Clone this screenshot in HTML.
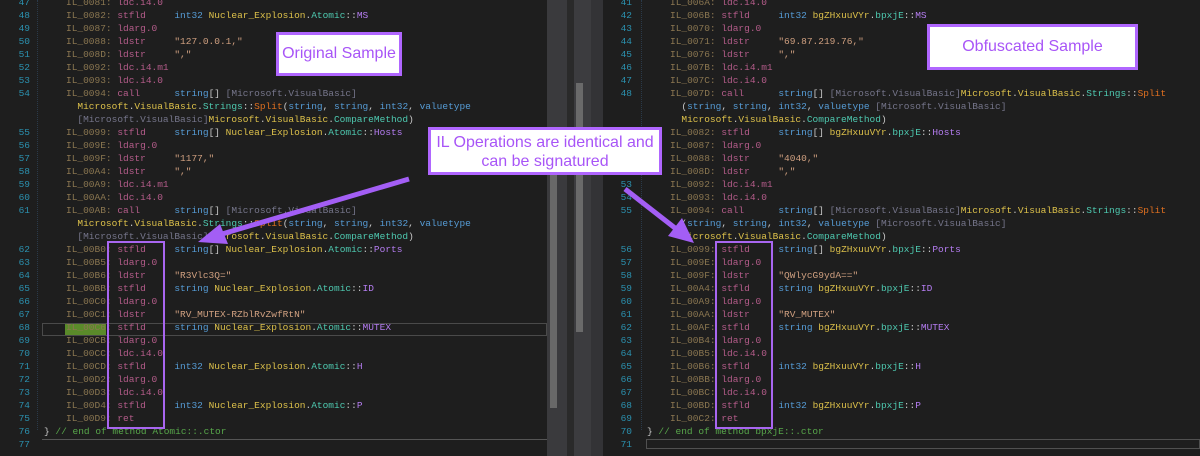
<!DOCTYPE html>
<html><head><meta charset="utf-8"><style>
body{margin:0;width:1200px;height:456px;background:#1e1e1e;overflow:hidden;position:relative;font-family:"Liberation Mono",monospace;}
.p{position:absolute;top:0;height:456px;}
.ln{position:absolute;font-size:9.5px;line-height:13px;color:#2b91af;text-align:right;width:30px;white-space:pre;}
.cd{position:absolute;font-size:9.5px;line-height:13px;color:#c8c8c8;white-space:pre;}
.l{color:#8a7650}.o{color:#b45c8a}.t{color:#569cd6}.c{color:#dcc04a}.n{color:#4ec9b0}.m{color:#b47cf0}.s{color:#d0a080}.g{color:#75758a}.f{color:#e07020}.cm{color:#57a64a}
.box{position:absolute;background:#fff;border:3px solid #b066ff;color:#a855f7;font-family:"Liberation Sans",sans-serif;font-size:16px;text-align:center;box-sizing:border-box;}
</style></head><body>
<!-- separators / scrollbars -->
<div style="position:absolute;left:547px;top:0;width:20px;height:456px;background:#3a3a3d"></div>
<div style="position:absolute;left:550px;top:175px;width:7px;height:233px;background:#686868"></div>
<div style="position:absolute;left:567px;top:0;width:7px;height:456px;background:#2a2a2a"></div>
<div style="position:absolute;left:574px;top:0;width:17px;height:456px;background:#3c3c3f"></div>
<div style="position:absolute;left:576px;top:83px;width:7px;height:249px;background:#6a6a6a"></div>
<div style="position:absolute;left:591px;top:0;width:12px;height:456px;background:#333336"></div>
<div style="position:absolute;left:603px;top:0;width:597px;height:456px;background:#1e1e1e"></div>

<!-- left highlights -->
<div style="position:absolute;left:42px;top:323px;width:503px;height:11px;border:1px solid #4a4a4a"></div>
<div style="position:absolute;left:65px;top:324px;width:41px;height:11px;background:#5a8a2a"></div>
<div style="position:absolute;left:42px;top:439px;width:505px;height:1px;background:#555"></div>
<div style="position:absolute;left:646px;top:439px;width:554px;height:10px;border:1px solid #505050;box-sizing:border-box"></div>
<div style="position:absolute;left:37px;top:0;width:1px;height:430px;border-left:1px dotted #2a3a4a"></div>
<div style="position:absolute;left:641px;top:0;width:1px;height:430px;border-left:1px dotted #2a3a4a"></div>

<div class="ln" style="left:0;top:-4px">47
48
49
50
51
52
53
54


55
56
57
58
59
60
61


62
63
64
65
66
67
68
69
70
71
72
73
74
75
76
77</div>
<div class="cd" style="left:66px;top:-4px"><span class="l">IL_0081:</span> <span class="o">ldc.i4.0</span>
<span class="l">IL_0082:</span> <span class="o">stfld</span>     <span class="t">int32</span> <span class="c">Nuclear_Explosion</span>.<span class="n">Atomic</span>::<span class="m">MS</span>
<span class="l">IL_0087:</span> <span class="o">ldarg.0</span>
<span class="l">IL_0088:</span> <span class="o">ldstr</span>     <span class="s">"127.0.0.1,"</span>
<span class="l">IL_008D:</span> <span class="o">ldstr</span>     <span class="s">","</span>
<span class="l">IL_0092:</span> <span class="o">ldc.i4.m1</span>
<span class="l">IL_0093:</span> <span class="o">ldc.i4.0</span>
<span class="l">IL_0094:</span> <span class="o">call</span>      <span class="t">string</span>[] <span class="g">[Microsoft.VisualBasic]</span>
  <span class="c">Microsoft</span>.<span class="c">VisualBasic</span>.<span class="n">Strings</span>::<span class="f">Split</span>(<span class="t">string</span>, <span class="t">string</span>, <span class="t">int32</span>, <span class="t">valuetype</span>
  <span class="g">[Microsoft.VisualBasic]</span><span class="c">Microsoft</span>.<span class="c">VisualBasic</span>.<span class="n">CompareMethod</span>)
<span class="l">IL_0099:</span> <span class="o">stfld</span>     <span class="t">string</span>[] <span class="c">Nuclear_Explosion</span>.<span class="n">Atomic</span>::<span class="m">Hosts</span>
<span class="l">IL_009E:</span> <span class="o">ldarg.0</span>
<span class="l">IL_009F:</span> <span class="o">ldstr</span>     <span class="s">"1177,"</span>
<span class="l">IL_00A4:</span> <span class="o">ldstr</span>     <span class="s">","</span>
<span class="l">IL_00A9:</span> <span class="o">ldc.i4.m1</span>
<span class="l">IL_00AA:</span> <span class="o">ldc.i4.0</span>
<span class="l">IL_00AB:</span> <span class="o">call</span>      <span class="t">string</span>[] <span class="g">[Microsoft.VisualBasic]</span>
  <span class="c">Microsoft</span>.<span class="c">VisualBasic</span>.<span class="n">Strings</span>::<span class="f">Split</span>(<span class="t">string</span>, <span class="t">string</span>, <span class="t">int32</span>, <span class="t">valuetype</span>
  <span class="g">[Microsoft.VisualBasic]</span><span class="c">Microsoft</span>.<span class="c">VisualBasic</span>.<span class="n">CompareMethod</span>)
<span class="l">IL_00B0:</span> <span class="o">stfld</span>     <span class="t">string</span>[] <span class="c">Nuclear_Explosion</span>.<span class="n">Atomic</span>::<span class="m">Ports</span>
<span class="l">IL_00B5:</span> <span class="o">ldarg.0</span>
<span class="l">IL_00B6:</span> <span class="o">ldstr</span>     <span class="s">"R3Vlc3Q="</span>
<span class="l">IL_00BB:</span> <span class="o">stfld</span>     <span class="t">string</span> <span class="c">Nuclear_Explosion</span>.<span class="n">Atomic</span>::<span class="m">ID</span>
<span class="l">IL_00C0:</span> <span class="o">ldarg.0</span>
<span class="l">IL_00C1:</span> <span class="o">ldstr</span>     <span class="s">"RV_MUTEX-RZblRvZwfRtN"</span>
<span class="l">IL_00C6:</span> <span class="o">stfld</span>     <span class="t">string</span> <span class="c">Nuclear_Explosion</span>.<span class="n">Atomic</span>::<span class="m">MUTEX</span>
<span class="l">IL_00CB:</span> <span class="o">ldarg.0</span>
<span class="l">IL_00CC:</span> <span class="o">ldc.i4.0</span>
<span class="l">IL_00CD:</span> <span class="o">stfld</span>     <span class="t">int32</span> <span class="c">Nuclear_Explosion</span>.<span class="n">Atomic</span>::<span class="m">H</span>
<span class="l">IL_00D2:</span> <span class="o">ldarg.0</span>
<span class="l">IL_00D3:</span> <span class="o">ldc.i4.0</span>
<span class="l">IL_00D4:</span> <span class="o">stfld</span>     <span class="t">int32</span> <span class="c">Nuclear_Explosion</span>.<span class="n">Atomic</span>::<span class="m">P</span>
<span class="l">IL_00D9:</span> <span class="o">ret</span></div>
<div class="cd" style="left:44px;top:425px">} <span class="cm">// end of method Atomic::.ctor</span></div>

<div class="ln" style="left:602px;top:-4px">41
42
43
44
45
46
47
48






53
54
55


56
57
58
59
60
61
62
63
64
65
66
67
68
69
70
71</div>
<div class="cd" style="left:670px;top:-4px"><span class="l">IL_006A:</span> <span class="o">ldc.i4.0</span>
<span class="l">IL_006B:</span> <span class="o">stfld</span>     <span class="t">int32</span> <span class="c">bgZHxuuVYr</span>.<span class="n">bpxjE</span>::<span class="m">MS</span>
<span class="l">IL_0070:</span> <span class="o">ldarg.0</span>
<span class="l">IL_0071:</span> <span class="o">ldstr</span>     <span class="s">"69.87.219.76,"</span>
<span class="l">IL_0076:</span> <span class="o">ldstr</span>     <span class="s">","</span>
<span class="l">IL_007B:</span> <span class="o">ldc.i4.m1</span>
<span class="l">IL_007C:</span> <span class="o">ldc.i4.0</span>
<span class="l">IL_007D:</span> <span class="o">call</span>      <span class="t">string</span>[] <span class="g">[Microsoft.VisualBasic]</span><span class="c">Microsoft</span>.<span class="c">VisualBasic</span>.<span class="n">Strings</span>::<span class="f">Split</span>
  (<span class="t">string</span>, <span class="t">string</span>, <span class="t">int32</span>, <span class="t">valuetype</span> <span class="g">[Microsoft.VisualBasic]</span>
  <span class="c">Microsoft</span>.<span class="c">VisualBasic</span>.<span class="n">CompareMethod</span>)
<span class="l">IL_0082:</span> <span class="o">stfld</span>     <span class="t">string</span>[] <span class="c">bgZHxuuVYr</span>.<span class="n">bpxjE</span>::<span class="m">Hosts</span>
<span class="l">IL_0087:</span> <span class="o">ldarg.0</span>
<span class="l">IL_0088:</span> <span class="o">ldstr</span>     <span class="s">"4040,"</span>
<span class="l">IL_008D:</span> <span class="o">ldstr</span>     <span class="s">","</span>
<span class="l">IL_0092:</span> <span class="o">ldc.i4.m1</span>
<span class="l">IL_0093:</span> <span class="o">ldc.i4.0</span>
<span class="l">IL_0094:</span> <span class="o">call</span>      <span class="t">string</span>[] <span class="g">[Microsoft.VisualBasic]</span><span class="c">Microsoft</span>.<span class="c">VisualBasic</span>.<span class="n">Strings</span>::<span class="f">Split</span>
  (<span class="t">string</span>, <span class="t">string</span>, <span class="t">int32</span>, <span class="t">valuetype</span> <span class="g">[Microsoft.VisualBasic]</span>
  <span class="c">Microsoft</span>.<span class="c">VisualBasic</span>.<span class="n">CompareMethod</span>)
<span class="l">IL_0099:</span> <span class="o">stfld</span>     <span class="t">string</span>[] <span class="c">bgZHxuuVYr</span>.<span class="n">bpxjE</span>::<span class="m">Ports</span>
<span class="l">IL_009E:</span> <span class="o">ldarg.0</span>
<span class="l">IL_009F:</span> <span class="o">ldstr</span>     <span class="s">"QWlycG9ydA=="</span>
<span class="l">IL_00A4:</span> <span class="o">stfld</span>     <span class="t">string</span> <span class="c">bgZHxuuVYr</span>.<span class="n">bpxjE</span>::<span class="m">ID</span>
<span class="l">IL_00A9:</span> <span class="o">ldarg.0</span>
<span class="l">IL_00AA:</span> <span class="o">ldstr</span>     <span class="s">"RV_MUTEX"</span>
<span class="l">IL_00AF:</span> <span class="o">stfld</span>     <span class="t">string</span> <span class="c">bgZHxuuVYr</span>.<span class="n">bpxjE</span>::<span class="m">MUTEX</span>
<span class="l">IL_00B4:</span> <span class="o">ldarg.0</span>
<span class="l">IL_00B5:</span> <span class="o">ldc.i4.0</span>
<span class="l">IL_00B6:</span> <span class="o">stfld</span>     <span class="t">int32</span> <span class="c">bgZHxuuVYr</span>.<span class="n">bpxjE</span>::<span class="m">H</span>
<span class="l">IL_00BB:</span> <span class="o">ldarg.0</span>
<span class="l">IL_00BC:</span> <span class="o">ldc.i4.0</span>
<span class="l">IL_00BD:</span> <span class="o">stfld</span>     <span class="t">int32</span> <span class="c">bgZHxuuVYr</span>.<span class="n">bpxjE</span>::<span class="m">P</span>
<span class="l">IL_00C2:</span> <span class="o">ret</span></div>
<div class="cd" style="left:647px;top:425px">} <span class="cm">// end of method bpxjE::.ctor</span></div>

<!-- purple boxes -->
<div style="position:absolute;left:107px;top:241px;width:58px;height:188px;border:2px solid #a866f0;box-sizing:border-box"></div>
<div style="position:absolute;left:715px;top:241px;width:58px;height:188px;border:2px solid #a866f0;box-sizing:border-box"></div>

<!-- arrows -->
<svg style="position:absolute;left:0;top:0" width="1200" height="456">
<line x1="409" y1="179" x2="222" y2="234" stroke="#a35ef5" stroke-width="5"/>
<polygon points="198,242 220,224 228,244" fill="#a35ef5"/>
<line x1="625" y1="189" x2="675" y2="228" stroke="#a35ef5" stroke-width="5"/>
<polygon points="694,243 668,236 682,218" fill="#a35ef5"/>
</svg>

<div class="box" style="left:276px;top:32px;width:126px;height:44px;line-height:38px">Original Sample</div>
<div class="box" style="left:927px;top:24px;width:211px;height:46px;line-height:40px">Obfuscated Sample</div>
<div class="box" style="left:428px;top:127px;width:234px;height:48px;line-height:19px;padding-top:3px">IL Operations are identical and<br>can be signatured</div>
</body></html>
